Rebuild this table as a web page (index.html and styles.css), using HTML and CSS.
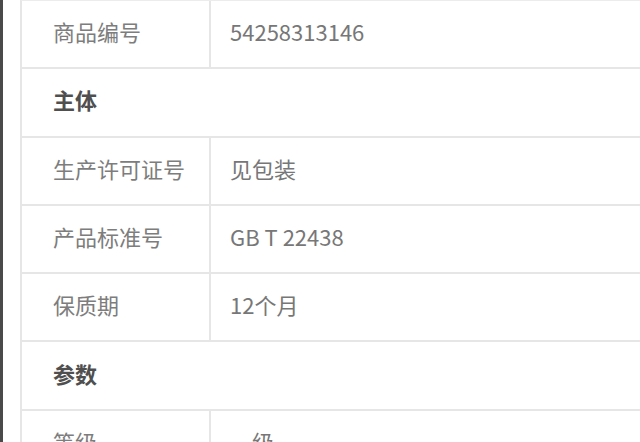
FILE: index.html
```html
<!DOCTYPE html>
<html lang="zh-CN">
  <head>
    <meta charset="UTF-8" />
    <meta name="viewport" content="width=device-width, initial-scale=1.0" />
    <title>商品参数</title>
    <link rel="stylesheet" href="styles.css">
  </head>
  <body>
    <div class="page">
      <div class="side-strip"></div>
      <div class="spec-table">
        <div class="spec-row">
          <div class="spec-label">商品编号</div>
          <div class="spec-value">54258313146</div>
        </div>
        <div class="spec-row section">
          <div class="spec-title">主体</div>
        </div>
        <div class="spec-row">
          <div class="spec-label">生产许可证号</div>
          <div class="spec-value">见包装</div>
        </div>
        <div class="spec-row">
          <div class="spec-label">产品标准号</div>
          <div class="spec-value">GB T 22438</div>
        </div>
        <div class="spec-row">
          <div class="spec-label">保质期</div>
          <div class="spec-value">12个月</div>
        </div>
        <div class="spec-row section">
          <div class="spec-title">参数</div>
        </div>
        <div class="spec-row">
          <div class="spec-label">等级</div>
          <div class="spec-value">一级</div>
        </div>
      </div>
    </div>
  </body>
</html>
```

FILE: styles.css
```css
* {
  margin: 0;
  padding: 0;
  box-sizing: border-box;
}

body {
  font-family: "Noto Sans CJK SC", "Noto Sans", sans-serif;
  background: #fff;
  overflow: hidden;
}

.page {
  display: flex;
  height: 442px;
}

.side-strip {
  width: 3px;
  background: #4a4a4a;
  flex-shrink: 0;
}

.spec-table {
  margin-left: 17px;
  flex: 1;
  border-left: 2px solid #e6e6e6;
  border-top: 1px solid #ececec;
}

.spec-row {
  display: grid;
  grid-template-columns: 189px 1fr;
  height: 68.3px;
  border-bottom: 2px solid #e6e6e6;
  font-size: 22px;
}

.spec-row.section {
  display: flex;
  align-items: center;
  padding-bottom: 6px;
}

.spec-label {
  display: flex;
  align-items: center;
  padding-left: 31px;
  padding-bottom: 6px;
  color: #7d7d7d;
  border-right: 2px solid #e6e6e6;
}

.spec-value {
  display: flex;
  align-items: center;
  padding-left: 19px;
  padding-bottom: 6px;
  color: #777;
}

.spec-title {
  padding-left: 31px;
  font-weight: bold;
  color: #4f4f4f;
}
```
